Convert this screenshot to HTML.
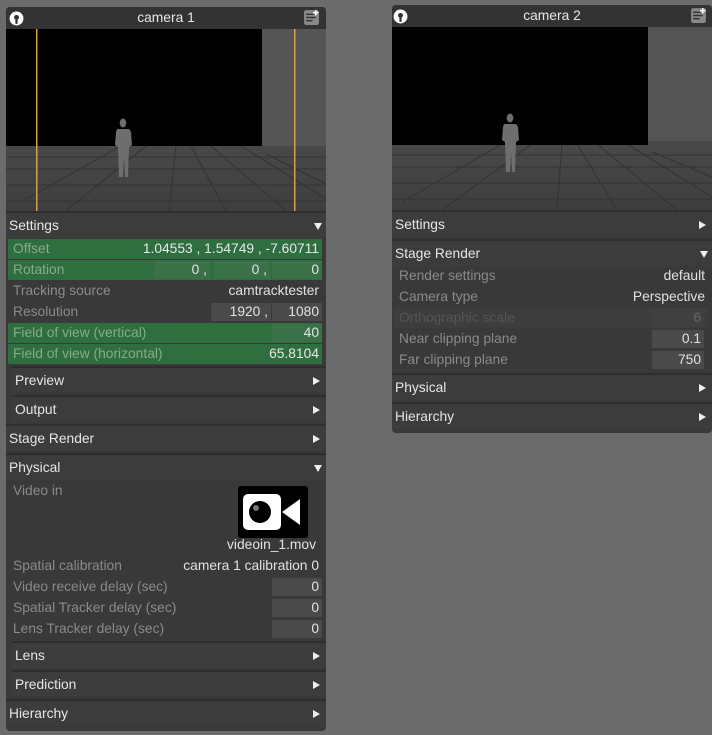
<!DOCTYPE html>
<html><head><style>
*{margin:0;padding:0;box-sizing:border-box}
body{width:712px;height:735px;background:#6b6b6b;position:relative;overflow:hidden;font-family:"Liberation Sans",sans-serif;font-size:13.8px}
.p{position:absolute;background:#393939;border-radius:4px;overflow:hidden}
.t{position:absolute;left:0;right:0;top:0;height:22px;background:#333;color:#e8e8e8;text-align:center;line-height:22px}
.a{position:absolute;white-space:nowrap}
.h{position:absolute;left:0;right:0;height:27px;border-top:2px solid #2e2e2e;background:#3c3c3c;color:#e6e6e6;line-height:25px;padding-left:3px}
.h.i{left:6px;padding-left:3px}
.tri{position:absolute;right:6px;top:9px;width:0;height:0;border-top:4px solid transparent;border-bottom:4px solid transparent;border-left:7px solid #eee}
.tri.d{top:10px;right:4px;border-left:4px solid transparent;border-right:4px solid transparent;border-top:7px solid #eee;border-bottom:0}
.r{position:absolute;left:2px;right:4px;height:20px;line-height:20px;color:#8a8a8a;padding-left:5px;white-space:nowrap}
.g{background:#2f6e3e;color:#85ab8c}
.v{position:absolute;right:3px;top:0;color:#e2e2e2}
.f{position:absolute;top:1px;height:18px;background:#4a4a4a;color:#e2e2e2;text-align:right;padding-right:3px;line-height:18px}
.gf{background:#3a7148}
.ic{position:absolute;top:4px;width:15px;height:15px}
</style></head><body>

<!-- Panel 1 -->
<div class="p" style="left:6px;top:7px;width:320px;height:724px">
 <div class="t">camera 1
  <svg class="ic" style="left:3px" viewBox="0 0 14 14"><circle cx="7" cy="7" r="6.5" fill="#fff"/><circle cx="7" cy="6" r="2.3" fill="#333"/><rect x="6" y="7" width="2" height="5" fill="#333"/></svg>
  <svg class="ic" style="right:6px;width:17px;height:17px;top:2px" viewBox="0 0 16 16"><rect x="1" y="1" width="14" height="14" rx="2" fill="#888"/><path d="M3 5h7M3 8h9M3 11h6" stroke="#333" stroke-width="1.3"/><path d="M12 1v5M9.5 3.5h5" stroke="#fff" stroke-width="1.5"/></svg>
 </div>
 <div class="a" style="left:0;top:22px;width:320px;height:182px;background:linear-gradient(#4e4e4e,#474747 70%,#3e3e3e)">
  <svg width="320" height="182" style="position:absolute;left:0;top:0">
   <g stroke="#333" stroke-width="1" fill="none">
    <path d="M0 140H320M0 156H320M0 172H320M0 128H320"/>
    <path d="M140 117L60 182M115 117L20 170M170 117L163 182M185 117L220 182M205 117L280 182M235 117L320 170M260 125L320 155"/>
   </g>
   <rect x="0" y="0" width="256" height="117" fill="#000"/>
   <rect x="256" y="0" width="64" height="117" fill="#555"/>
   <g fill="#6e6e6e"><ellipse cx="117" cy="94" rx="3.3" ry="4.5"/><path d="M111 100h12l2 3 1 13-3 2-1 30h-3l-1-20-1 20h-4l-1-30-3-2 1-13z"/></g>
   <rect x="30" y="0" width="1.5" height="182" fill="#e0a030"/>
   <rect x="288" y="0" width="1.5" height="182" fill="#e0a030"/>
  </svg>
 </div>
 <div class="h" style="top:204px">Settings<div class="tri d"></div></div>
 <div class="r g" style="top:232px">Offset<span class="v" style="color:#e8e8e8">1.04553 , 1.54749 , -7.60711</span></div>
 <div class="r g" style="top:253px">Rotation<div class="f gf" style="left:146px;width:56px">0 ,</div><div class="f gf" style="left:206px;width:56px">0 ,</div><div class="f gf" style="left:264px;width:50px">0</div></div>
 <div class="r" style="top:274px">Tracking source<span class="v">camtracktester</span></div>
 <div class="r" style="top:295px">Resolution<div class="f" style="left:203px;width:60px">1920 ,</div><div class="f" style="left:264px;width:50px">1080</div></div>
 <div class="r g" style="top:316px">Field of view (vertical)<div class="f gf" style="left:264px;width:50px">40</div></div>
 <div class="r g" style="top:337px">Field of view (horizontal)<span class="v" style="color:#e8e8e8">65.8104</span></div>
 <div class="h i" style="top:359px">Preview<div class="tri"></div></div>
 <div class="h i" style="top:388px">Output<div class="tri"></div></div>
 <div class="h" style="top:417px">Stage Render<div class="tri"></div></div>
 <div class="h" style="top:446px">Physical<div class="tri d"></div></div>
 <div class="r" style="top:474px">Video in</div>
 <div class="a" style="left:232px;top:479px;width:70px;height:52px;background:#000;border-radius:3px">
  <svg width="70" height="52"><rect x="5" y="8" width="38" height="36" rx="5" fill="#fff"/><circle cx="22" cy="26" r="11" fill="#000"/><circle cx="18" cy="22" r="3" fill="#777"/><path d="M44 26L62 13V39Z" fill="#fff"/></svg>
 </div>
 <div class="a" style="right:10px;top:530px;color:#e2e2e2">videoin_1.mov</div>
 <div class="r" style="top:549px">Spatial calibration<span class="v">camera 1 calibration 0</span></div>
 <div class="r" style="top:570px">Video receive delay (sec)<div class="f" style="left:264px;width:50px">0</div></div>
 <div class="r" style="top:591px">Spatial Tracker delay (sec)<div class="f" style="left:264px;width:50px">0</div></div>
 <div class="r" style="top:612px">Lens Tracker delay (sec)<div class="f" style="left:264px;width:50px">0</div></div>
 <div class="h i" style="top:634px">Lens<div class="tri"></div></div>
 <div class="h i" style="top:663px">Prediction<div class="tri"></div></div>
 <div class="h" style="top:692px">Hierarchy<div class="tri"></div></div>
</div>

<!-- Panel 2 -->
<div class="p" style="left:392px;top:5px;width:320px;height:428px">
 <div class="t">camera 2
  <svg class="ic" style="left:1px" viewBox="0 0 14 14"><circle cx="7" cy="7" r="6.5" fill="#fff"/><circle cx="7" cy="6" r="2.3" fill="#333"/><rect x="6" y="7" width="2" height="5" fill="#333"/></svg>
  <svg class="ic" style="right:5px;width:17px;height:17px;top:2px" viewBox="0 0 16 16"><rect x="1" y="1" width="14" height="14" rx="2" fill="#888"/><path d="M3 5h7M3 8h9M3 11h6" stroke="#333" stroke-width="1.3"/><path d="M12 1v5M9.5 3.5h5" stroke="#fff" stroke-width="1.5"/></svg>
 </div>
 <div class="a" style="left:0;top:22px;width:320px;height:183px;background:linear-gradient(#4e4e4e,#474747 70%,#3e3e3e)">
  <svg width="320" height="183" style="position:absolute;left:0;top:0">
   <g stroke="#333" stroke-width="1" fill="none">
    <path d="M0 140H320M0 156H320M0 172H320M0 128H320"/>
    <path d="M140 117L50 183M110 117L10 175M170 117L165 183M185 117L225 183M205 117L285 183M235 117L320 170M260 125L320 150"/>
   </g>
   <rect x="0" y="0" width="256" height="118" fill="#000"/>
   <rect x="256" y="0" width="64" height="114" fill="#555"/>
   <g fill="#6e6e6e"><ellipse cx="118" cy="91" rx="3.3" ry="4.5"/><path d="M112 97h12l2 3 1 13-3 2-1 30h-3l-1-20-1 20h-4l-1-30-3-2 1-13z"/></g>
  </svg>
 </div>
 <div class="h" style="top:205px">Settings<div class="tri"></div></div>
 <div class="h" style="top:234px">Stage Render<div class="tri d"></div></div>
 <div class="r" style="top:261px">Render settings<span class="v">default</span></div>
 <div class="r" style="top:282px">Camera type<span class="v">Perspective</span></div>
 <div class="r" style="top:303px;color:#555;background:#3d3d3d">Orthographic scale<div class="f" style="left:258px;width:52px;background:#404040;color:#666">6</div></div>
 <div class="r" style="top:324px">Near clipping plane<div class="f" style="left:258px;width:52px">0.1</div></div>
 <div class="r" style="top:345px">Far clipping plane<div class="f" style="left:258px;width:52px">750</div></div>
 <div class="h" style="top:368px">Physical<div class="tri"></div></div>
 <div class="h" style="top:397px">Hierarchy<div class="tri"></div></div>
</div>
</body></html>
